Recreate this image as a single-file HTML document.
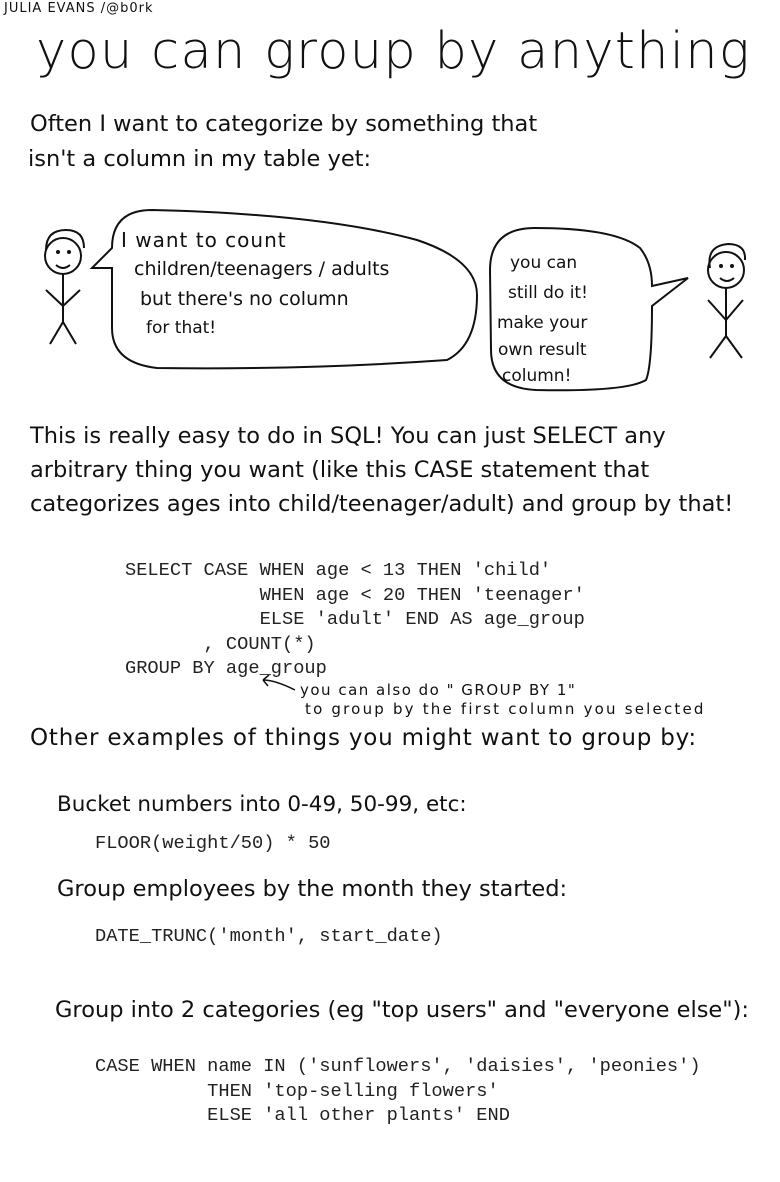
<!DOCTYPE html>
<html><head><style>
body{margin:0;width:780px;height:1182px;background:#fff;position:relative;overflow:hidden;font-family:"DejaVu Sans","Liberation Sans",sans-serif;color:#111}
.t{position:absolute;white-space:nowrap;line-height:1}
.m{position:absolute;white-space:pre;font-family:"Liberation Mono",monospace;font-size:18.7px;color:#222;line-height:24.6px}
</style></head><body>
<div class="t" style="left:4px;top:2px;font-size:13px;letter-spacing:1px">JULIA EVANS /@b0rk</div>
<div class="t" style="left:36px;top:26px;font-size:51px;letter-spacing:1.3px;font-weight:300">you can group by anything</div>
<div class="t" style="left:30px;top:113px;font-size:22.5px">Often I want to categorize by something that</div>
<div class="t" style="left:28px;top:148px;font-size:22.5px">isn't a column in my table yet:</div>
<svg style="position:absolute;left:0;top:0" width="780" height="420" fill="none" stroke="#111" stroke-width="2">
<circle cx="63" cy="256" r="18"/><path d="M46 250q0-20 20-20q18 0 18 18"/><path d="M56 265q7 6 14 0"/><circle cx="58" cy="252" r="1"/><circle cx="69" cy="252" r="1"/>
<path d="M63 274v50M46 290l17 16 17-16M50 344l13-22 13 22"/>
<path d="M112 248q0-38 40-38q170 4 265 30q60 20 60 55q0 50-30 65q-140 10-290 8q-45-5-45-40v-60l-20 0z"/>
<path d="M490 270q0-42 45-42q80 0 105 20q12 15 12 38l36-8-36 28q0 60-6 74q-20 12-110 10q-45-2-45-40z"/>
<circle cx="726" cy="270" r="18"/><path d="M710 268q-4-22 18-24q18 0 17 16"/><path d="M720 278q7 6 14 0"/><circle cx="721" cy="266" r="1"/><circle cx="732" cy="266" r="1"/>
<path d="M726 288v50M708 300l18 20 17-20M710 358l16-22 16 22"/>
</svg>
<div class="t" style="left:121px;top:230px;font-size:20px;letter-spacing:1px">I want to count</div>
<div class="t" style="left:134px;top:260px;font-size:19px">children/teenagers / adults</div>
<div class="t" style="left:140px;top:290px;font-size:19px">but there's no column</div>
<div class="t" style="left:146px;top:320px;font-size:17px">for that!</div>
<div class="t" style="left:510px;top:255px;font-size:17px">you can</div>
<div class="t" style="left:508px;top:285px;font-size:17px">still do it!</div>
<div class="t" style="left:497px;top:315px;font-size:17px">make your</div>
<div class="t" style="left:498px;top:342px;font-size:17px">own result</div>
<div class="t" style="left:502px;top:368px;font-size:17px">column!</div>
<div class="t" style="left:30px;top:425px;font-size:22.5px">This is really easy to do in SQL! You can just SELECT any</div>
<div class="t" style="left:30px;top:459px;font-size:22.5px">arbitrary thing you want (like this CASE statement that</div>
<div class="t" style="left:30px;top:493px;font-size:22.5px">categorizes ages into child/teenager/adult) and group by that!</div>
<div class="m" style="left:125px;top:558px">SELECT CASE WHEN age &lt; 13 THEN 'child'
            WHEN age &lt; 20 THEN 'teenager'
            ELSE 'adult' END AS age_group
       , COUNT(*)
GROUP BY age_group</div>
<svg style="position:absolute;left:255px;top:670px" width="50" height="30" fill="none" stroke="#111" stroke-width="1.5"><path d="M40 20q-20-10-32-10M8 10l6-5M8 10l5 6"/></svg>
<div class="t" style="left:300px;top:683px;font-size:15px;letter-spacing:1.5px">you can also do " GROUP BY 1"</div>
<div class="t" style="left:305px;top:702px;font-size:15px;letter-spacing:2.2px">to group by the first column you selected</div>
<div class="t" style="left:30px;top:727px;font-size:23px;letter-spacing:0.8px">Other examples of things you might want to group by:</div>
<div class="t" style="left:57px;top:794px;font-size:21.5px">Bucket numbers into 0-49, 50-99, etc:</div>
<div class="m" style="left:95px;top:831px">FLOOR(weight/50) * 50</div>
<div class="t" style="left:57px;top:878px;font-size:22.5px">Group employees by the month they started:</div>
<div class="m" style="left:95px;top:924px">DATE_TRUNC('month', start_date)</div>
<div class="t" style="left:55px;top:999px;font-size:22.5px">Group into 2 categories (eg "top users" and "everyone else"):</div>
<div class="m" style="left:95px;top:1054px">CASE WHEN name IN ('sunflowers', 'daisies', 'peonies')
          THEN 'top-selling flowers'
          ELSE 'all other plants' END</div>
</body></html>
